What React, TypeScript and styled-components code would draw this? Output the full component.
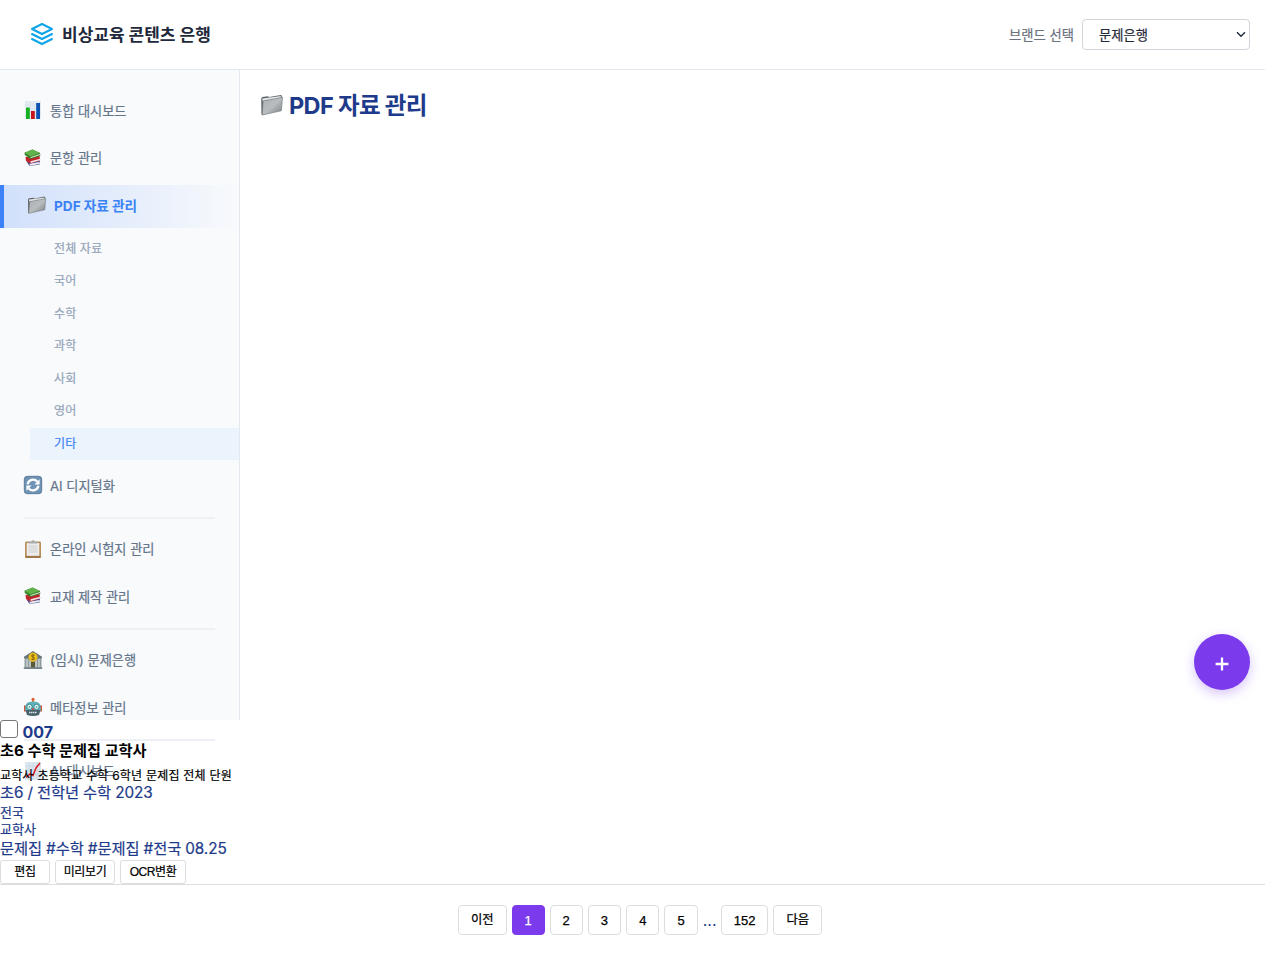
import React from "react";
import styled, { createGlobalStyle } from "styled-components";

const Global = createGlobalStyle`
  * { box-sizing: border-box; }
  body {
    margin: 0;
    background: #fff;
    color: #1e3a8a;
    font-family: Inter, "Noto Sans CJK KR", sans-serif;
    font-size: 16px;
    overflow: hidden;
  }
  button { font-family: "Liberation Sans", "Noto Sans CJK KR", sans-serif; cursor: pointer; }
`;

const T = styled.span<{ $ls?: number; $thin?: boolean }>`
  letter-spacing: ${(p) => p.$ls ?? 0}px;
  -webkit-text-stroke: ${(p) => (p.$thin ? 0 : 0.2)}px currentColor;
  white-space: nowrap;
`;

const Page = styled.div`
  width: 100%;
  height: 955px;
  display: flex;
  flex-direction: column;
`;

const Header = styled.header`
  height: 70px;
  flex: none;
  display: flex;
  align-items: center;
  justify-content: space-between;
  padding: 0 15px 1px 30px;
  border-bottom: 1px solid #e2e8f0;
`;
const Brand = styled.div`
  display: flex;
  align-items: center;
  gap: 8px;
  font-size: 17px;
  line-height: 24px;
  font-weight: 700;
  color: #1e293b;
  & > span { padding-top: 1px; }
`;
const Picker = styled.div`
  display: flex;
  align-items: center;
  gap: 8px;
  font-size: 13.3px;
  color: #6b7280;
`;
const SelectBox = styled.div`
  width: 168px;
  height: 31px;
  margin-top: 1px;
  border: 1px solid #d1d5db;
  border-radius: 4px;
  display: flex;
  align-items: center;
  justify-content: space-between;
  padding: 0 3px 0 16px;
  color: #1f2937;
`;

const Body = styled.div`
  display: flex;
  height: 650px;
  flex: none;
`;
const Sidebar = styled.nav`
  width: 240px;
  height: 650px;
  padding-top: 20px;
  background: #f8fafc;
  border-right: 1px solid #e2e8f0;
`;
const Item = styled.div<{ $active?: boolean }>`
  height: 42.5px;
  margin-bottom: 5px;
  padding: 0 0 2px 23px;
  border-left: ${(p) => (p.$active ? "4px solid #3b82f6" : "0")};
  background: ${(p) => (p.$active ? "linear-gradient(90deg, #d1e0fb, #f8fafc)" : "none")};
  color: ${(p) => (p.$active ? "#3b82f6" : "#64748b")};
  font-weight: ${(p) => (p.$active ? 700 : 400)};
  font-size: ${(p) => (p.$active ? 13.6 : 13.2)}px;
  display: flex;
  align-items: center;
  gap: 7px;
`;
const Sub = styled.div<{ $active?: boolean }>`
  height: 32.5px;
  margin-left: 30px;
  padding-left: 24px;
  font-size: 12px;
  line-height: 32.500px;
  color: ${(p) => (p.$active ? "#3b82f6" : "#94a3b8")};
  background: ${(p) => (p.$active ? "#ebf3fc" : "none")};
`;
const SubList = styled.div`
  margin-bottom: 5px;
`;
const Divider = styled.div`
  height: 2px;
  margin: 9.5px 24px 9.5px;
  background: #edf0f5;
`;
const Main = styled.main`
  flex: 1;
  padding: 20px;
  display: flex;
  position: relative;
`;
const Title = styled.h1`
  margin: 0;
  height: 30px;
  display: flex;
  align-items: center;
  gap: 5px;
  font-size: 23.5px;
  font-weight: 700;
  line-height: 26px;
  padding-bottom: 1px;
  & > span { padding-top: 2px; }
`;
const Fab = styled.button`
  position: absolute;
  right: 15px;
  bottom: 30px;
  width: 56px;
  height: 56px;
  border: 0;
  padding: 4px 0 0;
  border-radius: 50%;
  background: #7c3aed;
  box-shadow: 0 4px 12px rgba(124, 58, 237, 0.3);
  display: flex;
  align-items: center;
  justify-content: center;
`;

const Line = styled.div<{ $h: number; $size?: number; $color?: string; $bold?: boolean; $top?: number }>`
  height: ${(p) => p.$h}px;
  padding-top: ${(p) => p.$top ?? 0}px;
  line-height: ${(p) => p.$h - (p.$top ?? 0)}px;
  font-size: ${(p) => p.$size ?? 16}px;
  font-weight: ${(p) => (p.$bold ? 700 : 400)};
  color: ${(p) => p.$color ?? "#1e3a8a"};
  display: flex;
`;
const IdLine = styled(Line)`
  line-height: 24px;
`;
const Check = styled.span`
  width: 18px;
  height: 18px;
  margin-right: 4.5px;
  border: 1px solid #767676;
  border-radius: 3px;
  background: #fff;
`;
const Actions = styled.div`
  display: flex;
  gap: 5px;
`;
const Small = styled.button<{ $w: number }>`
  width: ${(p) => p.$w}px;
  height: 24px;
  padding: 0;
  border: 1px solid #ddd;
  border-radius: 3px;
  background: #fff;
  color: #000;
  font-size: 12px;
  line-height: 20px;
`;
const Pager = styled.footer`
  border-top: 1px solid #ddd;
  padding: 20px 0 0 15px;
  display: flex;
  justify-content: center;
  gap: 5px;
`;
const PageBtn = styled.button<{ $w: number; $on?: boolean; $word?: boolean }>`
  width: ${(p) => p.$w}px;
  height: 30px;
  padding: ${(p) => (p.$word ? 0 : 2)}px 0 0;
  border: 1px solid ${(p) => (p.$on ? "#7c3aed" : "#ddd")};
  border-radius: 4px;
  background: ${(p) => (p.$on ? "#7c3aed" : "#fff")};
  color: ${(p) => (p.$on ? "#fff" : "#000")};
  font-size: ${(p) => (p.$word ? 12.3 : 13)}px;
  line-height: 26px;
  -webkit-text-stroke: 0.25px currentColor;
`;
const Dots = styled.span`
  width: 13px;
  line-height: 30px;
  text-align: center;
`;

const Svg = ({ s = 20, children }: { s?: number; children: React.ReactNode }) => (
  <svg width={s} height={s} viewBox="0 0 20 20" fill="none">{children}</svg>
);
const Chart = () => (
  <Svg>
    <path d="M2 1h16v18H2z" fill="#e3ebf2" />
    <path d="M2 5h16M2 9h16M2 13h16" stroke="#cfdbe6" strokeWidth=".6" />
    <path d="M3 7.5h3.8V19H3z" fill="#15b01e" />
    <path d="M8 11h3.8v8H8z" fill="#c8141e" />
    <path d="M13.2 3H17v16h-3.8z" fill="#0c50b4" />
  </Svg>
);
const Books = () => (
  <Svg>
    <path d="M3.5 13.5l3 4.5 10-1.500.5-3.500-6-1z" fill="#4b4f94" />
    <path d="M6.500 15.800l10-1.800.3 1.800-10 2z" fill="#ececf2" />
    <path d="M2.500 9l14-1 .7 4.500-9.700 3L3 13z" fill="#c3232b" />
    <path d="M7.500 13.300l9.500-2.500.2 1.500-9.500 2.700z" fill="#f4e6e4" />
    <path d="M1.500 4.800L9.500 1.500 17 5l.3 3L7.500 11 1.800 7z" fill="#35802c" />
    <path d="M1.500 4.800L9.500 1.500 17 5 7.300 8.200z" fill="#62b34b" />
    <path d="M7.500 9L17 5.900v1.200l-9.300 3z" fill="#dfe9d5" />
  </Svg>
);
const Folder = ({ s = 20 }: { s?: number }) => (
  <Svg s={s}>
    <defs>
      <linearGradient id={`fold${s}`} x1="0" y1="0" x2="1" y2="1">
        <stop stopColor="#a9aeb1" /><stop offset=".5" stopColor="#b9bdbf" /><stop offset="1" stopColor="#777c7f" />
      </linearGradient>
    </defs>
    <path d="M1 4.500L2 3.300l4.500-.6 1 .7L17.500 1.600l.8 1-1 10L2 18.300l-.8-.6z" fill="#5f6568" />
    <path d="M2 4.600L17.400 2.400v2L2.200 6.800z" fill="#e2e5e5" />
    <path d="M2.600 6.600L18.800 3.600l-1 11.200L1.800 18.400z" fill={`url(#fold${s})`} stroke="#6f7578" strokeWidth=".5" />
  </Svg>
);
const Refresh = () => (
  <Svg>
    <rect x="1.300" y="1.300" width="17.400" height="17.400" rx="3" fill="#6f93b5" stroke="#4d6d8d" strokeWidth=".8" />
    <path d="M4.600 9.200a5.500 5.500 0 0 1 9.600-2.700M15.400 10.800A5.500 5.500 0 0 1 5.800 13.500" stroke="#fff" strokeWidth="2.300" />
    <path d="M16.600 4.200v5.200h-5.200zM3.400 15.800v-5.200h5.200z" fill="#fff" />
  </Svg>
);
const Clipboard = () => (
  <Svg>
    <rect x="2" y="2.500" width="16" height="16.500" rx="1.200" fill="#b98e5a" />
    <path d="M2.400 17.500h15.200v1H2.400z" fill="#87613a" />
    <path d="M3.700 4h12.600v12.800H3.700z" fill="#ececec" />
    <path d="M5.500 7h9M5.500 9h9M5.500 11h9M5.500 13h9" stroke="#cfcfcf" strokeWidth="1.200" />
    <path d="M5.500 4.500V3l3-.5C8.700.8 11.300.8 11.500 2.500l3 .5v1.500z" fill="#a9adae" />
  </Svg>
);
const Bank = () => (
  <Svg>
    <path d="M1.500 7L10 1.500 18.500 7v11h-17z" fill="#8f9da0" />
    <path d="M1 6.800L10 1l9 5.800v1.400H1z" fill="#66767b" />
    <path d="M4 9v8M7 9v8M13 9v8M16 9v8" stroke="#dce3dd" strokeWidth="1.100" />
    <path d="M8 12h4v6H8z" fill="#5d5b3a" />
    <path d="M.8 17.300h18.400V19H.8z" fill="#75858b" />
    <circle cx="10" cy="7.200" r="4.400" fill="#f2c522" stroke="#c4940f" strokeWidth=".5" />
    <path d="M11.800 5.500c-.8-.9-3.400-.8-3.400.5s3.400.9 3.400 2.400-2.800 1.500-3.700.4M10 4.300v5.900" stroke="#795b08" strokeWidth=".9" />
  </Svg>
);
const Robot = () => (
  <Svg>
    <path d="M10 2v4" stroke="#c58a3a" strokeWidth="2" />
    <circle cx="10" cy="2.300" r="1.500" fill="#e5592d" />
    <path d="M1 8.500h2.500v6H1zM16.500 8.500H19v6h-2.500z" fill="#cd5439" />
    <path d="M2.500 8.500Q3.500 4.500 10 4.500t7.500 4L18 14H2z" fill="#5fb3b8" />
    <path d="M2.500 13h15L16 18q-6 2-12 0z" fill="#48616b" />
    <circle cx="6.500" cy="9.800" r="2.600" fill="#dff9f6" stroke="#357b86" strokeWidth=".8" />
    <circle cx="13.500" cy="9.800" r="2.600" fill="#dff9f6" stroke="#357b86" strokeWidth=".8" />
    <circle cx="6.500" cy="9.800" r=".9" fill="#4fa3a8" />
    <circle cx="13.500" cy="9.800" r=".9" fill="#4fa3a8" />
    <path d="M10 10.500l1.300 2.500H8.700z" fill="#d93a2f" />
    <path d="M6 15.500h8" stroke="#d9e6e6" strokeWidth="1.400" strokeDasharray="1.500 .5" />
  </Svg>
);
const Trend = () => (
  <Svg>
    <path d="M2 1h16v18H2z" fill="#dde7f0" />
    <path d="M2 5h16M2 9h16M2 13h16M6 1v18M10 1v18M14 1v18" stroke="#c2d1de" strokeWidth=".6" />
    <path d="M3 16.500l4-3.500 3 1.500L13 7l4-5" stroke="#d91c24" strokeWidth="1.500" />
  </Svg>
);

type Entry = { icon: React.ReactNode; text: string };
const Row = ({ icon, text }: Entry) => (
  <Item>{icon}<T>{text}</T></Item>
);

const subjects = ["전체 자료", "국어", "수학", "과학", "사회", "영어", "기타"];

export default function App() {
  return (
    <Page>
      <Global />
      <Header>
        <Brand>
          <svg width="24" height="24" viewBox="0 0 24 24" fill="none" stroke="#0ea5e9" strokeWidth="2" strokeLinecap="round" strokeLinejoin="round">
            <path d="M12 2L2 7l10 5 10-5-10-5zM2 17l10 5 10-5M2 12l10 5 10-5" />
          </svg>
          <T $thin>비상교육 콘텐츠 은행</T>
        </Brand>
        <Picker>
          <T>브랜드 선택</T>
          <SelectBox>
            <T>문제은행</T>
            <svg width="10" height="7" viewBox="0 0 10 7" fill="none" stroke="#1f2937" strokeWidth="1.400"><path d="M1 1.200l4 4 4-4" /></svg>
          </SelectBox>
        </Picker>
      </Header>
      <Body>
        <Sidebar>
          <Row icon={<Chart />} text="통합 대시보드" />
          <Row icon={<Books />} text="문항 관리" />
          <Item $active><Folder /><T $thin>PDF 자료 관리</T></Item>
          <SubList>
            {subjects.map((s) => (
              <Sub key={s} $active={s === "기타"}><T $ls={0.1}>{s}</T></Sub>
            ))}
          </SubList>
          <Row icon={<Refresh />} text="AI 디지털화" />
          <Divider />
          <Row icon={<Clipboard />} text="온라인 시험지 관리" />
          <Row icon={<Books />} text="교재 제작 관리" />
          <Divider />
          <Row icon={<Bank />} text="(임시) 문제은행" />
          <Row icon={<Robot />} text="메타정보 관리" />
          <Divider />
          <Row icon={<Trend />} text="AI 대시보드" />
        </Sidebar>
        <Main>
          <Title><Folder s={24} /><T $thin $ls={-0.65}>PDF 자료 관리</T></Title>
          <Fab aria-label="추가">
            <svg width="14" height="14" viewBox="0 0 14 14" stroke="#fff" strokeWidth="2.300"><path d="M7 .6v12.800M.6 7h12.800" /></svg>
          </Fab>
        </Main>
      </Body>
      <section>
        <IdLine $h={22} $bold><Check /><T $thin>007</T></IdLine>
        <Line $h={18} $size={15.2} $bold $color="#000"><T $thin>초6 수학 문제집 교학사</T></Line>
        <Line $h={24} $top={7} $size={12} $color="#000"><T $ls={0.22}>교학사 초등학교 수학 6학년 문제집 전체 단원</T></Line>
        <Line $h={18} $size={15.3}><T $ls={-0.12}>초6 / 전학년 수학 2023</T></Line>
        <Line $h={20} $size={13}><T>전국</T></Line>
        <Line $h={15} $size={13}><T>교학사</T></Line>
        <Line $h={23} $size={15.3}><T $ls={-0.1}>문제집 #수학 #문제집 #전국 08.25</T></Line>
        <Actions>
          <Small $w={50}><T $ls={-0.4}>편집</T></Small>
          <Small $w={60}><T $ls={-0.4}>미리보기</T></Small>
          <Small $w={66}><T $ls={-0.4}>OCR변환</T></Small>
        </Actions>
      </section>
      <Pager>
        <PageBtn $w={48.5} $word>이전</PageBtn>
        <PageBtn $w={33} $on>1</PageBtn>
        <PageBtn $w={33.3}>2</PageBtn>
        <PageBtn $w={33.3}>3</PageBtn>
        <PageBtn $w={33.3}>4</PageBtn>
        <PageBtn $w={33.3}>5</PageBtn>
        <Dots>...</Dots>
        <PageBtn $w={47.8}>152</PageBtn>
        <PageBtn $w={48.5} $word>다음</PageBtn>
      </Pager>
    </Page>
  );
}
